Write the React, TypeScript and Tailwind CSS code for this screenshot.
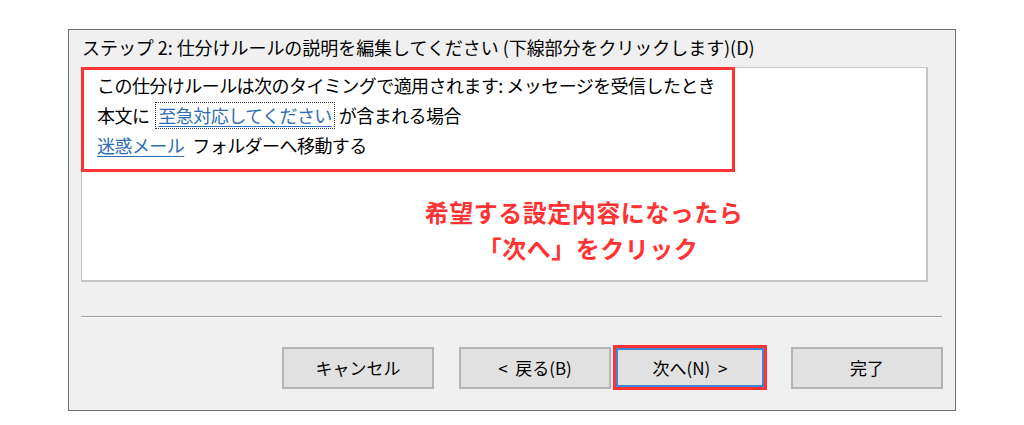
export default function App() {
  const font = { fontFamily: '"Noto Sans CJK JP", "Noto Sans", sans-serif' }

  return (
    <div className="w-[1024px] h-[425px] bg-white overflow-hidden pt-[29px]" style={font}>
      {/* Dialog frame */}
      <div className="ml-[68px] w-[888px] h-[382px] border border-[#6e6e6e] bg-[#f0f0f0] flex flex-col">
        {/* Step title */}
        <div className="mt-[5px] pl-[13px] text-[18px] leading-[24px] text-black tracking-[-0.05px]">
          ステップ 2: 仕分けルールの説明を編集してください (下線部分をクリックします)(D)
        </div>

        {/* Description box */}
        <div className="mt-[8px] ml-[12px] w-[847px] h-[215px] bg-white border border-[#c4c4c4] border-b-2 border-r-2">
          <div className="-ml-px -mt-px w-[654px] h-[105px] border-[3px] border-[#ff3333] pl-[13px] text-[18px] leading-[30px] text-black tracking-[-0.55px]">
            <div>この仕分けルールは次のタイミングで適用されます: メッセージを受信したとき</div>
            <div>
              本文に
              <span className="inline-block ml-[6px] mr-[4px] px-[2px] leading-[25px] border border-dotted border-[#333]">
                <span className="text-[#2f6db5] underline underline-offset-[3px]">至急対応してください</span>
              </span>
              が含まれる場合
            </div>
            <div>
              <span className="text-[#2f6db5] underline underline-offset-[3px]">迷惑メール</span>
              <span className="ml-[8px]">フォルダーへ移動する</span>
            </div>
          </div>

          {/* Annotation */}
          <div className="mt-[22px] ml-[340px] w-[324px] text-center text-[24px] leading-[36px] font-bold text-[#ff3333] tracking-[0.5px]">
            <div>希望する設定内容になったら</div>
            <div className="pl-[8px]">「次へ」をクリック</div>
          </div>
        </div>

        {/* Separator */}
        <div className="mt-[34px] ml-[12px] mr-[13px] border-t border-[#a0a0a0] border-b border-b-white" />

        {/* Buttons */}
        <div className="mt-[27px] flex items-center pr-[12px] text-[17px] text-black">
          <button className="ml-auto w-[152px] h-[42px] bg-[#e1e1e1] border-2 border-[#b4b4b4]">
            キャンセル
          </button>
          <button className="ml-[25px] w-[152px] h-[42px] bg-[#e1e1e1] border-2 border-[#b4b4b4]">
            &lt;&nbsp;&nbsp;戻る(B)
          </button>
          <div className="ml-[2px] border-[3px] border-[#ff3333]">
            <button className="block w-[148px] h-[39px] bg-[#e1e1e1] border-2 border-[#3c86d6]">
              次へ(N)&nbsp;&nbsp;&gt;
            </button>
          </div>
          <button className="ml-[24px] w-[152px] h-[42px] bg-[#e1e1e1] border-2 border-[#b4b4b4]">
            完了
          </button>
        </div>
      </div>
    </div>
  )
}
